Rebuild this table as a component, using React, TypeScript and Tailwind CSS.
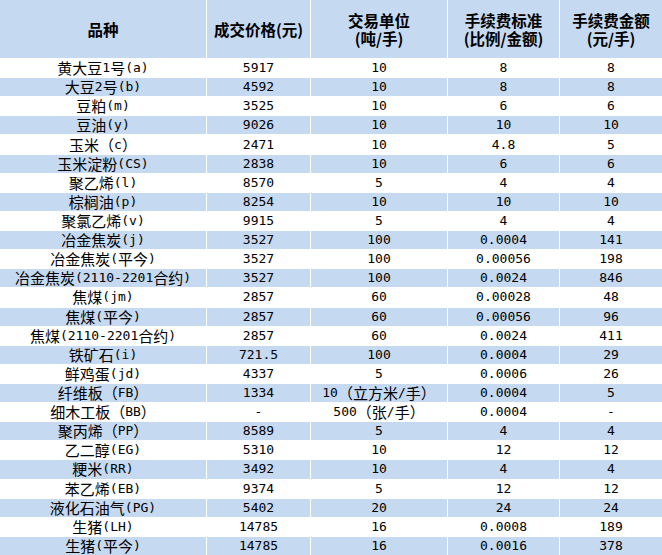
import React from 'react';

type Row = [string, string, string, string, string];

const rows: Row[] = [
  ['黄大豆1号(a)', '5917', '10', '8', '8'],
  ['大豆2号(b)', '4592', '10', '8', '8'],
  ['豆粕(m)', '3525', '10', '6', '6'],
  ['豆油(y)', '9026', '10', '10', '10'],
  ['玉米（c）', '2471', '10', '4.8', '5'],
  ['玉米淀粉(CS)', '2838', '10', '6', '6'],
  ['聚乙烯(l)', '8570', '5', '4', '4'],
  ['棕榈油(p)', '8254', '10', '10', '10'],
  ['聚氯乙烯(v)', '9915', '5', '4', '4'],
  ['冶金焦炭(j)', '3527', '100', '0.0004', '141'],
  ['冶金焦炭(平今)', '3527', '100', '0.00056', '198'],
  ['冶金焦炭(2110-2201合约)', '3527', '100', '0.0024', '846'],
  ['焦煤(jm)', '2857', '60', '0.00028', '48'],
  ['焦煤(平今)', '2857', '60', '0.00056', '96'],
  ['焦煤(2110-2201合约)', '2857', '60', '0.0024', '411'],
  ['铁矿石(i)', '721.5', '100', '0.0004', '29'],
  ['鲜鸡蛋(jd)', '4337', '5', '0.0006', '26'],
  ['纤维板（FB）', '1334', '10（立方米/手）', '0.0004', '5'],
  ['细木工板（BB）', '-', '500（张/手）', '0.0004', '-'],
  ['聚丙烯（PP）', '8589', '5', '4', '4'],
  ['乙二醇(EG)', '5310', '10', '12', '12'],
  ['粳米(RR)', '3492', '10', '4', '4'],
  ['苯乙烯(EB)', '9374', '5', '12', '12'],
  ['液化石油气(PG)', '5402', '20', '24', '24'],
  ['生猪(LH)', '14785', '16', '0.0008', '189'],
  ['生猪(平今)', '14785', '16', '0.0016', '378'],
];

const headers: string[][] = [
  ['品种'],
  ['成交价格(元)'],
  ['交易单位', '(吨/手)'],
  ['手续费标准', '(比例/金额)'],
  ['手续费金额', '(元/手)'],
];

// half-width runs get a monospace face, like the original table's font
function Cell({ text }: { text: string }) {
  const parts = text.split(/([\x20-\x7e]+)/).filter(Boolean);
  return (
    <>
      {parts.map((p, i) =>
        /^[\x20-\x7e]+$/.test(p) ? (
          <span key={i} className="font-['DejaVu_Sans_Mono',monospace] text-[13px]">
            {p}
          </span>
        ) : (
          <span key={i}>{p}</span>
        )
      )}
    </>
  );
}

export default function App() {
  return (
    <div
      className="grid h-[555px] w-[662px] grid-cols-[206px_103px_136px_111px_102px] grid-rows-[58px_repeat(26,minmax(0,1fr))] gap-px bg-white text-black"
      style={{ fontFamily: '"Noto Sans CJK SC", "Noto Sans", sans-serif' }}
    >
      {/* Header */}
      {headers.map((lines, i) => (
        <div
          key={i}
          className="flex flex-col items-center justify-center bg-[#c5d9f1] text-[15.5px] font-bold leading-[18px]"
        >
          {lines.map((l) => (
            <div key={l} className="h-[18px] whitespace-nowrap">{l}</div>
          ))}
        </div>
      ))}

      {/* Rows */}
      {rows.map((row, r) =>
        row.map((cell, c) => (
          <div
            key={`${r}-${c}`}
            className={`flex items-center justify-center whitespace-nowrap text-[15px] leading-[18px] ${
              r % 2 === 1 ? 'bg-[#c5d9f1]' : 'bg-white'
            }`}
          >
            <Cell text={cell} />
          </div>
        ))
      )}
    </div>
  );
}
